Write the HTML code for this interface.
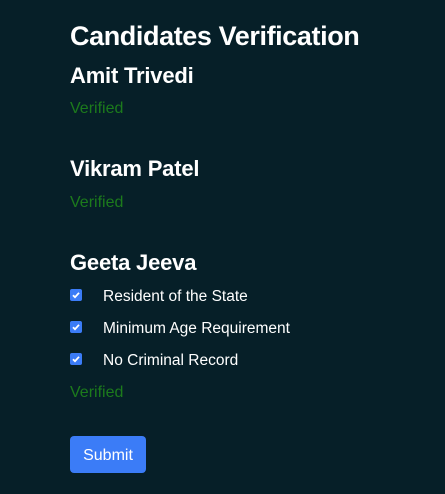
<!DOCTYPE html>
<html><head><style>
body{margin:0;width:445px;height:494px;background:#061f28;font-family:"Liberation Sans",sans-serif;color:#fff;position:relative;overflow:hidden}
.a{position:absolute;white-space:nowrap}
.t{left:70px;top:21px;font-size:27px;font-weight:bold;letter-spacing:-0.4px}
.n{left:70px;font-size:22px;font-weight:bold;letter-spacing:-0.2px}
.v{left:70px;font-size:16px;color:#1c7a1c}
.cb{left:70px;width:12px;height:12px;background:#3b7cf7;border-radius:2px}
.cb svg{position:absolute;left:1px;top:1px}
.l{left:103px;font-size:15.5px}
.btn{left:70px;top:436px;width:76px;height:37px;background:#3b7cf7;border-radius:4px;font-size:16px;line-height:40px;text-align:center}
</style></head><body>
<div class="a t">Candidates Verification</div>
<div class="a n" style="top:63px">Amit Trivedi</div>
<div class="a v" style="top:100px">Verified</div>
<div class="a n" style="top:156px">Vikram Patel</div>
<div class="a v" style="top:194px">Verified</div>
<div class="a n" style="top:250px">Geeta Jeeva</div>
<div class="a cb" style="top:289px"><svg width="10" height="10" viewBox="0 0 10 10"><path d="M2 5.2L4 7.2L8 2.8" stroke="#fff" stroke-width="1.8" fill="none"/></svg></div>
<div class="a l" style="top:288px">Resident of the State</div>
<div class="a cb" style="top:321px"><svg width="10" height="10" viewBox="0 0 10 10"><path d="M2 5.2L4 7.2L8 2.8" stroke="#fff" stroke-width="1.8" fill="none"/></svg></div>
<div class="a l" style="top:320px">Minimum Age Requirement</div>
<div class="a cb" style="top:353px"><svg width="10" height="10" viewBox="0 0 10 10"><path d="M2 5.2L4 7.2L8 2.8" stroke="#fff" stroke-width="1.8" fill="none"/></svg></div>
<div class="a l" style="top:352px">No Criminal Record</div>
<div class="a v" style="top:384px">Verified</div>
<div class="a btn">Submit</div>
</body></html>
